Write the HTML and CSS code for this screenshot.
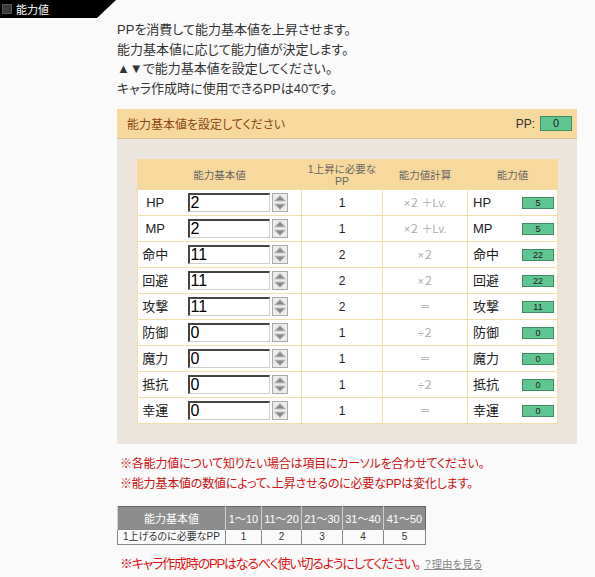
FILE: index.html
```html
<!DOCTYPE html>
<html lang="ja">
<head>
<meta charset="utf-8">
<title>能力値</title>
<link rel="stylesheet" href="styles.css">
</head>
<body>
<div class="titlebar"><span class="sq"></span><span class="tt">能力値</span></div>
<div class="intro">
  <p>PPを消費して能力基本値を上昇させます。</p>
  <p>能力基本値に応じて能力値が決定します。</p>
  <p>▲▼で能力基本値を設定してください。</p>
  <p>キャラ作成時に使用できるPPは40です。</p>
</div>
<div class="panel">
  <div class="panel-head">
    <span class="ptitle">能力基本値を設定してください</span>
    <span class="ppbox">PP: <span class="badge big">0</span></span>
  </div>
  <div class="panel-body">
    <table class="stats">
      <colgroup><col class="c1"><col class="c2"><col class="c3"><col class="c4"><col class="c5"></colgroup>
      <thead>
        <tr><th colspan="2">能力基本値</th><th>1上昇に必要な<br>PP</th><th>能力値計算</th><th>能力値</th></tr>
      </thead>
      <tbody>
        <tr><td class="lab">HP</td><td class="inp"><div class="iw"><input class="num" value="2"><svg class="spin" width="16" height="19" viewBox="0 0 16 19"><rect x="0.5" y="0.5" width="15" height="18" fill="#ededed" stroke="#a9a9a9"/><path d="M2.5 8 L8 2.5 L13.5 8 Z" fill="#8a8a8a" stroke="#c4c4c4"/><path d="M2.5 11 L8 16.5 L13.5 11 Z" fill="#8a8a8a" stroke="#c4c4c4"/></svg></div></td><td class="need">1</td><td class="calc">×２ ＋Lv.</td><td class="stat"><div class="sw"><span>HP</span><span class="badge">5</span></div></td></tr>
        <tr><td class="lab">MP</td><td class="inp"><div class="iw"><input class="num" value="2"><svg class="spin" width="16" height="19" viewBox="0 0 16 19"><rect x="0.5" y="0.5" width="15" height="18" fill="#ededed" stroke="#a9a9a9"/><path d="M2.5 8 L8 2.5 L13.5 8 Z" fill="#8a8a8a" stroke="#c4c4c4"/><path d="M2.5 11 L8 16.5 L13.5 11 Z" fill="#8a8a8a" stroke="#c4c4c4"/></svg></div></td><td class="need">1</td><td class="calc">×２ ＋Lv.</td><td class="stat"><div class="sw"><span>MP</span><span class="badge">5</span></div></td></tr>
        <tr><td class="lab">命中</td><td class="inp"><div class="iw"><input class="num" value="11"><svg class="spin" width="16" height="19" viewBox="0 0 16 19"><rect x="0.5" y="0.5" width="15" height="18" fill="#ededed" stroke="#a9a9a9"/><path d="M2.5 8 L8 2.5 L13.5 8 Z" fill="#8a8a8a" stroke="#c4c4c4"/><path d="M2.5 11 L8 16.5 L13.5 11 Z" fill="#8a8a8a" stroke="#c4c4c4"/></svg></div></td><td class="need">2</td><td class="calc">×２</td><td class="stat"><div class="sw"><span>命中</span><span class="badge">22</span></div></td></tr>
        <tr><td class="lab">回避</td><td class="inp"><div class="iw"><input class="num" value="11"><svg class="spin" width="16" height="19" viewBox="0 0 16 19"><rect x="0.5" y="0.5" width="15" height="18" fill="#ededed" stroke="#a9a9a9"/><path d="M2.5 8 L8 2.5 L13.5 8 Z" fill="#8a8a8a" stroke="#c4c4c4"/><path d="M2.5 11 L8 16.5 L13.5 11 Z" fill="#8a8a8a" stroke="#c4c4c4"/></svg></div></td><td class="need">2</td><td class="calc">×２</td><td class="stat"><div class="sw"><span>回避</span><span class="badge">22</span></div></td></tr>
        <tr><td class="lab">攻撃</td><td class="inp"><div class="iw"><input class="num" value="11"><svg class="spin" width="16" height="19" viewBox="0 0 16 19"><rect x="0.5" y="0.5" width="15" height="18" fill="#ededed" stroke="#a9a9a9"/><path d="M2.5 8 L8 2.5 L13.5 8 Z" fill="#8a8a8a" stroke="#c4c4c4"/><path d="M2.5 11 L8 16.5 L13.5 11 Z" fill="#8a8a8a" stroke="#c4c4c4"/></svg></div></td><td class="need">2</td><td class="calc">＝</td><td class="stat"><div class="sw"><span>攻撃</span><span class="badge">11</span></div></td></tr>
        <tr><td class="lab">防御</td><td class="inp"><div class="iw"><input class="num" value="0"><svg class="spin" width="16" height="19" viewBox="0 0 16 19"><rect x="0.5" y="0.5" width="15" height="18" fill="#ededed" stroke="#a9a9a9"/><path d="M2.5 8 L8 2.5 L13.5 8 Z" fill="#8a8a8a" stroke="#c4c4c4"/><path d="M2.5 11 L8 16.5 L13.5 11 Z" fill="#8a8a8a" stroke="#c4c4c4"/></svg></div></td><td class="need">1</td><td class="calc">÷２</td><td class="stat"><div class="sw"><span>防御</span><span class="badge">0</span></div></td></tr>
        <tr><td class="lab">魔力</td><td class="inp"><div class="iw"><input class="num" value="0"><svg class="spin" width="16" height="19" viewBox="0 0 16 19"><rect x="0.5" y="0.5" width="15" height="18" fill="#ededed" stroke="#a9a9a9"/><path d="M2.5 8 L8 2.5 L13.5 8 Z" fill="#8a8a8a" stroke="#c4c4c4"/><path d="M2.5 11 L8 16.5 L13.5 11 Z" fill="#8a8a8a" stroke="#c4c4c4"/></svg></div></td><td class="need">1</td><td class="calc">＝</td><td class="stat"><div class="sw"><span>魔力</span><span class="badge">0</span></div></td></tr>
        <tr><td class="lab">抵抗</td><td class="inp"><div class="iw"><input class="num" value="0"><svg class="spin" width="16" height="19" viewBox="0 0 16 19"><rect x="0.5" y="0.5" width="15" height="18" fill="#ededed" stroke="#a9a9a9"/><path d="M2.5 8 L8 2.5 L13.5 8 Z" fill="#8a8a8a" stroke="#c4c4c4"/><path d="M2.5 11 L8 16.5 L13.5 11 Z" fill="#8a8a8a" stroke="#c4c4c4"/></svg></div></td><td class="need">1</td><td class="calc">÷２</td><td class="stat"><div class="sw"><span>抵抗</span><span class="badge">0</span></div></td></tr>
        <tr><td class="lab">幸運</td><td class="inp"><div class="iw"><input class="num" value="0"><svg class="spin" width="16" height="19" viewBox="0 0 16 19"><rect x="0.5" y="0.5" width="15" height="18" fill="#ededed" stroke="#a9a9a9"/><path d="M2.5 8 L8 2.5 L13.5 8 Z" fill="#8a8a8a" stroke="#c4c4c4"/><path d="M2.5 11 L8 16.5 L13.5 11 Z" fill="#8a8a8a" stroke="#c4c4c4"/></svg></div></td><td class="need">1</td><td class="calc">＝</td><td class="stat"><div class="sw"><span>幸運</span><span class="badge">0</span></div></td></tr>
      </tbody>
    </table>
  </div>
</div>
<div class="notes">
  <p>※各能力値について知りたい場合は項目にカーソルを合わせてください。</p>
  <p>※能力基本値の数値によって、上昇させるのに必要なPPは変化します。</p>
</div>
<table class="cost">
  <colgroup><col class="k1"><col class="k2"><col class="k3"><col class="k4"><col class="k5"><col class="k6"></colgroup>
  <tr><th>能力基本値</th><th>1～10</th><th>11～20</th><th>21～30</th><th>31～40</th><th>41～50</th></tr>
  <tr><td>1上げるのに必要なPP</td><td>1</td><td>2</td><td>3</td><td>4</td><td>5</td></tr>
</table>
<p class="final">※キャラ作成時のPPはなるべく使い切るようにしてください。<a class="why" href="#">？理由を見る</a></p>
</body>
</html>
```

FILE: styles.css
```css
body {
  margin: 0;
  background: #fafafa;
  font-family: "Liberation Sans", "Noto Sans CJK JP", sans-serif;
  color: #333;
  font-feature-settings: "palt";
}
p { margin: 0; }

.titlebar {
  width: 116px;
  height: 18px;
  background: #000;
  clip-path: polygon(0 0, 116px 0, 97px 18px, 0 18px);
  display: flex;
  align-items: center;
}
.sq {
  width: 8px;
  height: 8px;
  background: #3a3a3a;
  border: 1px solid #555;
  margin-left: 2px;
}
.tt {
  color: #fff;
  font-size: 11px;
  margin-left: 4px;
}

.intro {
  margin: 2px 0 0 117px;
  font-size: 13px;
  line-height: 19.5px;
  color: #333;
}

.panel {
  margin: 11px 0 0 117px;
  width: 460px;
}
.panel-head {
  height: 29px;
  background: #f8d99d;
  border-bottom: 1px solid #dfc08f;
  display: flex;
  align-items: center;
  justify-content: space-between;
  padding: 0 5px 0 10px;
}
.ptitle {
  color: #8b4513;
  font-size: 12px;
}
.ppbox {
  display: flex;
  align-items: center;
  gap: 5px;
  font-size: 12px;
  color: #333;
}
.badge {
  display: inline-block;
  width: 30px;
  height: 10px;
  background: #5fc691;
  border: 1px solid #3e8c64;
  font-size: 9px;
  line-height: 10px;
  text-align: center;
  color: #222;
}
.badge.big {
  height: 13px;
  line-height: 13px;
  font-size: 11px;
}

.panel-body {
  background: #ebe5dd;
  padding: 20px;
}
.stats {
  width: 420px;
  border-collapse: collapse;
  table-layout: fixed;
  background: #fff;
}
.c1 { width: 35px; }
.c2 { width: 129px; }
.c3 { width: 81px; }
.c4 { width: 85px; }
.c5 { width: 90px; }
.stats th, .stats td {
  border: 1px solid #f1dea9;
  padding: 0;
}
.stats th {
  background: #f8d99d;
  border-color: #f8d99d #f8d99d #f1dea9 #f8d99d;
  height: 29px;
  font-weight: normal;
  font-size: 10.5px;
  color: #666;
  line-height: 12px;
}
.stats td {
  height: 25px;
  line-height: 16px;
}
td.lab {
  text-align: center;
  font-size: 13px;
  color: #222;
  border-right: none;
}
td.inp { border-left: none; }
.iw {
  display: flex;
  align-items: center;
  margin-left: 15px;
}
input.num {
  width: 82px;
  height: 19px;
  box-sizing: border-box;
  border-top: 2px solid #444;
  border-left: 2px solid #444;
  border-right: 1px solid #cfcfcf;
  border-bottom: 1px solid #cfcfcf;
  font: 16px "Liberation Sans", sans-serif;
  padding: 0 0 0 1px;
  margin: 0;
  background: #fff;
  color: #000;
  outline: none;
}
.spin { display: block; margin-left: 2px; }
td.need {
  text-align: center;
  font-size: 12px;
  color: #222;
}
td.calc {
  text-align: center;
  font-size: 11px;
  color: #aaa;
}
.sw {
  display: flex;
  justify-content: space-between;
  align-items: center;
  padding: 0 3px 0 5px;
  font-size: 13px;
  color: #222;
}

.notes {
  margin: 10px 0 0 120px;
  color: #cc1111;
  font-size: 12px;
  line-height: 20px;
  letter-spacing: -0.2px;
}

.cost {
  margin: 12px 0 0 117px;
  border-collapse: collapse;
  table-layout: fixed;
  width: 308px;
  border: 1px solid #666;
}
.k1 { width: 108px; }
.k2 { width: 36px; }
.k3 { width: 40px; }
.k4 { width: 41px; }
.k5 { width: 41px; }
.k6 { width: 42px; }
.cost th {
  background: #8e8e8e;
  color: #fff;
  font-weight: normal;
  height: 22px;
  font-size: 11px;
  padding: 0;
  border-left: 1px solid #cfcfcf;
}
.cost td {
  height: 14px;
  padding: 0;
  text-align: center;
  border: 1px solid #888;
  color: #333;
  font-size: 10px;
  line-height: 12px;
}

.final {
  margin: 9px 0 0 120px;
  font-size: 13px;
  color: #dd1111;
  line-height: 20px;
  letter-spacing: -1.2px;
}
.why {
  font-size: 10.5px;
  color: #888;
  text-decoration: underline;
  margin-left: 4px;
  letter-spacing: 0;
}
```
